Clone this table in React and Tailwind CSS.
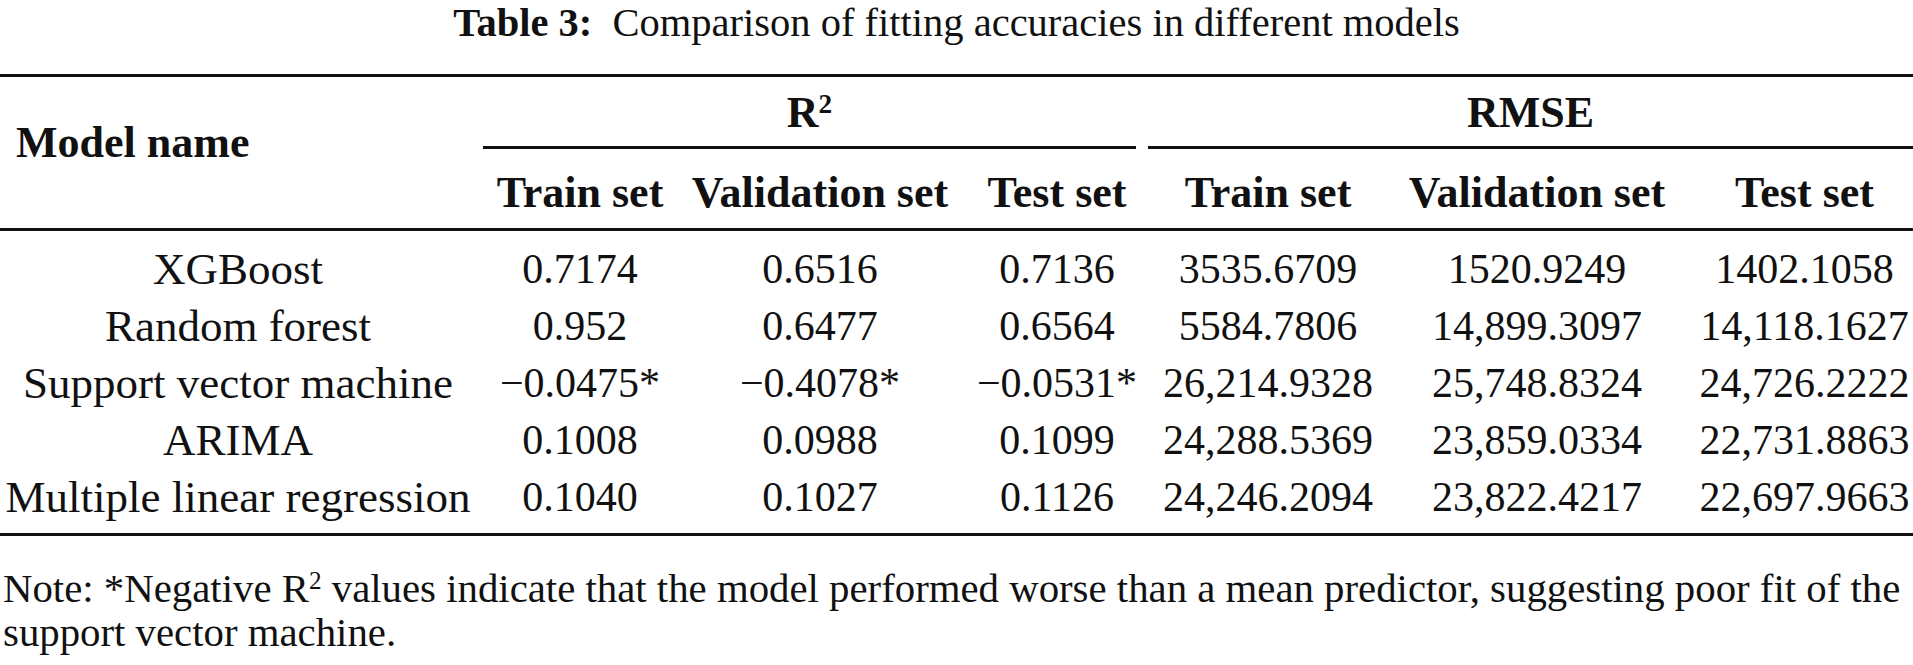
const cols = "grid grid-cols-[476px_208px_272px_202px_220px_318px_217px]";

const rows = [
  ["XGBoost", "0.7174", "0.6516", "0.7136", "3535.6709", "1520.9249", "1402.1058"],
  ["Random forest", "0.952", "0.6477", "0.6564", "5584.7806", "14,899.3097", "14,118.1627"],
  ["Support vector machine", "\u22120.0475*", "\u22120.4078*", "\u22120.0531*", "26,214.9328", "25,748.8324", "24,726.2222"],
  ["ARIMA", "0.1008", "0.0988", "0.1099", "24,288.5369", "23,859.0334", "22,731.8863"],
  ["Multiple linear regression", "0.1040", "0.1027", "0.1126", "24,246.2094", "23,822.4217", "22,697.9663"],
];

const subHeads = ["Train set", "Validation set", "Test set", "Train set", "Validation set", "Test set"];

function Rule({ className = "" }) {
  return <div className={`h-[3px] bg-[#111] ${className}`} />;
}

export default function App() {
  return (
    <div className="w-[1913px] h-[665px] overflow-hidden bg-white text-[#111] font-['Liberation_Serif','Times_New_Roman',serif]">
      {/* caption */}
      <p className="text-center text-[40.5px] leading-[45px] whitespace-nowrap">
        <span className="font-bold">Table 3:</span>&nbsp; Comparison of fitting accuracies in different models
      </p>

      <Rule className="mt-[29px]" />

      {/* header */}
      <div className="flex text-[44px] font-bold">
        <div className="w-[476px] shrink-0 pl-[16px] pt-[41px] leading-[50px] whitespace-nowrap">Model name</div>
        <div className="flex flex-1 flex-col pt-[11px] pb-[10px]">
          <div className="flex">
            <div className="w-[682px]">
              <div className="ml-[7px] mr-[22px]">
                <div className="text-center leading-[50px]">
                  R<sup className="text-[0.62em]">2</sup>
                </div>
                <Rule className="mt-[8px]" />
              </div>
            </div>
            <div className="flex-1">
              <div className="-ml-[10px]">
                <div className="text-center leading-[50px]">RMSE</div>
                <Rule className="mt-[8px]" />
              </div>
            </div>
          </div>
          <div className="mt-[19px] grid grid-cols-[208px_272px_202px_220px_318px_217px] leading-[50px]">
            {subHeads.map((h, i) => (
              <div key={i} className="flex justify-center whitespace-nowrap">{h}</div>
            ))}
          </div>
        </div>
      </div>

      <Rule />

      {/* body */}
      <div className="pt-[10px] pb-[7px]">
        {rows.map((r) => (
          <div key={r[0]} className={`${cols} h-[57px] leading-[57px]`}>
            {r.map((cell, i) => (
              <div
                key={i}
                className={`flex justify-center whitespace-nowrap ${i === 0 ? "text-[45px]" : "text-[42px]"}`}
              >
                {cell}
              </div>
            ))}
          </div>
        ))}
      </div>

      <Rule />

      {/* note */}
      <div className="mt-[31px] pl-[3px] text-[40.8px] leading-[44px]">
        <p className="whitespace-nowrap">
          Note: *Negative R<sup className="text-[0.62em]">2</sup> values indicate that the model performed worse than a mean predictor, suggesting poor fit of the
        </p>
        <p>support vector machine.</p>
      </div>
    </div>
  );
}
